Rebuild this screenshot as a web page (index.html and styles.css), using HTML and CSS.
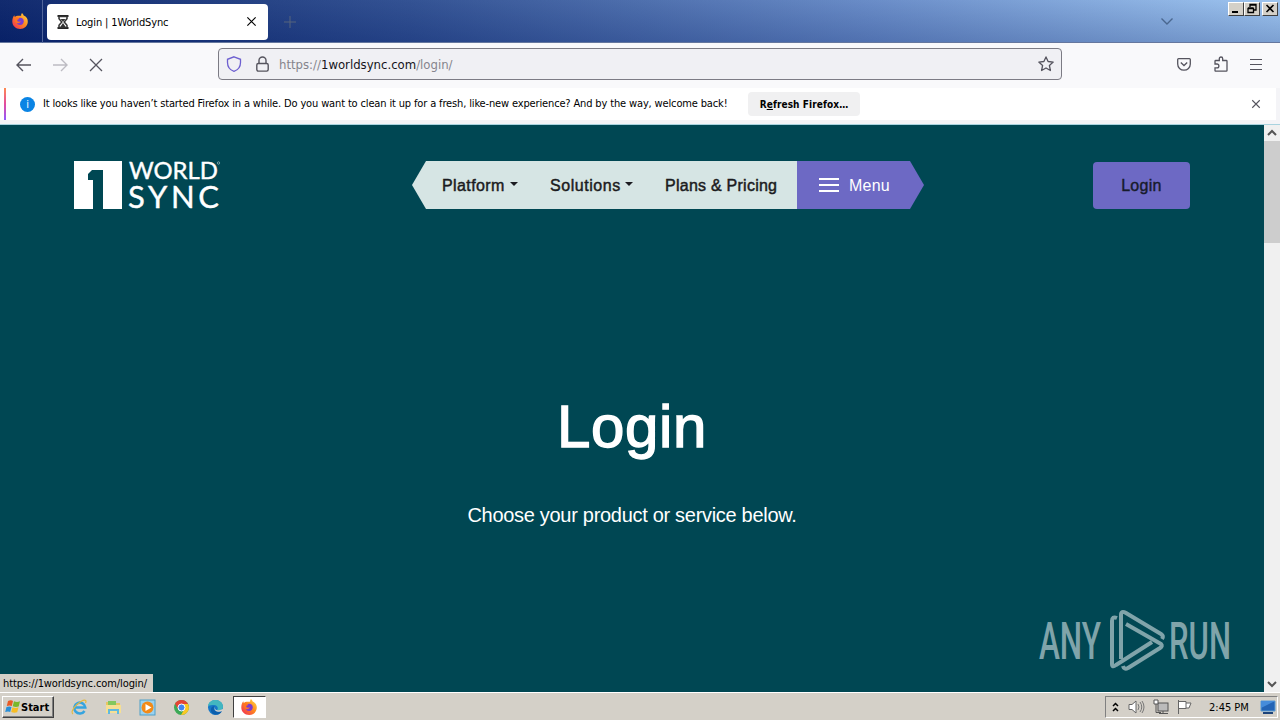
FILE: index.html
```html
<!DOCTYPE html>
<html lang="en">

<head>
	<meta charset="UTF-8">
	<meta name="viewport" content="width=device-width, initial-scale=1.0">
	<title>Login | 1WorldSync</title>
	<link rel="stylesheet" href="styles.css">
</head>

<body>
	<svg width="0" height="0" class="defs">
		<defs>
			<linearGradient id="fire" x1="1" y1="0" x2="0" y2="1">
				<stop offset="0" stop-color="#ffe14a" />
				<stop offset=".45" stop-color="#ff8a1e" />
				<stop offset="1" stop-color="#f0245c" />
			</linearGradient>
			<symbol id="firefox" viewBox="0 0 16 16">
				<path d="M10 0c1 1 1.400 1.700 1.700 2.500C14.500 3.600 16 6 15.800 9c-.3 4-3.500 7-7.600 7C3.700 16 .3 12.800.3 8.500.3 6 1 3.900 2.300 2.300l.5 1.700c.8-.8 1.800-1.200 3-1.200h3.300C9 1.700 9.300.8 10 0z" fill="url(#fire)" />
				<circle cx="8.100" cy="8.300" r="3.600" fill="#7a3bd0" />
				<path d="M2.500 5c2-.8 3.700-.5 5 .9-1.500.2-2.500.8-2.200 1.900.4 1.200 2.300.9 3.600.5-1 2.400-3.900 2.500-5.500.7z" fill="#ff751f" />
			</symbol>
			<symbol id="close" viewBox="0 0 16 16">
				<path d="M2 2l12 12M14 2L2 14" fill="none" stroke="currentColor" stroke-width="1.700" />
			</symbol>
		</defs>
	</svg>

	<header class="titlebar">
		<div class="view-button"><svg width="16" height="16"><use href="#firefox" /></svg></div>
		<div class="tab">
			<svg class="hourglass" width="12" height="14" viewBox="0 0 12 14">
				<path d="M.5 1h11M.5 13h11" stroke="#222" stroke-width="1.800" />
				<path d="M2 1.500v2.200L4.800 7 2 10.300v2.200h8v-2.200L7.200 7 10 3.700V1.500z" fill="#fff" stroke="#333" stroke-width="1.500" />
				<path d="M3.500 4h5L6 6.700zM6 8l2.700 4H3.300z" fill="#333" />
			</svg>
			<span class="tab-title">Login | 1WorldSync</span>
			<svg class="tab-close" width="11" height="11"><use href="#close" /></svg>
		</div>
		<svg class="new-tab" width="12" height="12" viewBox="0 0 12 12"><path d="M6 0v12M0 6h12" stroke="#56657c" /></svg>
		<svg class="all-tabs" width="12" height="7" viewBox="0 0 12 7"><path d="M.5.500L6 6l5.500-5.500" fill="none" stroke="#4a678f" stroke-width="1.400" /></svg>
		<div class="window-buttons">
			<span class="win"><svg width="14" height="12"><path d="M3 9h6" stroke="#000" stroke-width="2" /></svg></span>
			<span class="win"><svg width="14" height="12"><path d="M5 4V1.500h6V7H9M5 2h6M3 5.500h5.500v4H3zM3 5h5.500" fill="none" stroke="#000" stroke-width="1.300" /></svg></span>
			<span class="win win-close"><svg width="14" height="12"><path d="M3.500 2l7 7M10.500 2l-7 7" stroke="#000" stroke-width="1.600" /></svg></span>
		</div>
	</header>

	<nav class="toolbar">
		<svg class="back" width="16" height="14" viewBox="0 0 16 14"><path d="M15 7H1.500M7 1L1 7l6 6" fill="none" stroke="#55545e" stroke-width="1.400" /></svg>
		<svg class="forward" width="16" height="14" viewBox="0 0 16 14"><path d="M1 7h13.500M9 1l6 6-6 6" fill="none" stroke="#bdbcc3" stroke-width="1.400" /></svg>
		<svg class="stop" width="14" height="14" viewBox="0 0 14 14"><path d="M1 1l12 12M13 1L1 13" stroke="#55545e" stroke-width="1.300" /></svg>
		<div class="urlbar">
			<svg width="16" height="16" viewBox="0 0 16 16"><path d="M8 .8l6.500 2.500v3.200c0 4.300-2.700 7.500-6.500 8.800C4.200 14 1.500 10.800 1.500 6.500V3.300z" fill="none" stroke="#6d5fd0" stroke-width="1.300" /></svg>
			<svg class="lock" width="13" height="16" viewBox="0 0 13 16"><rect x=".8" y="7.500" width="11.400" height="7.600" rx="1.500" fill="none" stroke="#55545e" stroke-width="1.400" /><path d="M3 7.500v-3a3.500 3.500 0 0 1 7 0v3" fill="none" stroke="#55545e" stroke-width="1.400" /></svg>
			<span class="url">https://<b>1worldsync.com</b>/login/</span>
			<svg class="star" width="16" height="16" viewBox="0 0 16 16"><path d="M8 .9l2.100 4.600 5.100.6-3.800 3.400 1 5L8 12l-4.400 2.500 1-5L.8 6.100l5.100-.6z" fill="none" stroke="#55545e" stroke-width="1.300" stroke-linejoin="round" /></svg>
		</div>
		<svg class="pocket" width="14" height="13" viewBox="0 0 14 13"><path d="M1.600.7h10.800q.9 0 .9.900V6c0 3.600-2.800 6.200-6.300 6.200S.7 9.600.7 6V1.600q0-.9.9-.9z" fill="none" stroke="#55545e" stroke-width="1.300" /><path d="M3.800 4.500L7 7.500l3.200-3" fill="none" stroke="#55545e" stroke-width="1.300" /></svg>
		<svg class="extensions" width="14" height="16" viewBox="0 0 14 16"><path d="M1 8V5.200q0-.7.700-.7h3.600V2.700a1.700 1.700 0 0 1 3.400 0v1.800h3.600q.7 0 .7.700v9.300q0 .7-.7.700H1.700q-.7 0-.7-.7v-2.700h2a1.700 1.700 0 0 0 0-3.800z" fill="none" stroke="#55545e" stroke-width="1.300" /></svg>
		<svg class="app-menu" width="12" height="11" viewBox="0 0 12 11"><path d="M0 .5h12M0 5.500h12M0 10.500h12" stroke="#55545e" /></svg>
	</nav>

	<div class="infobar">
		<span class="info-icon">i</span>
		<span class="info-text">It looks like you haven’t started Firefox in a while. Do you want to clean it up for a fresh, like-new experience? And by the way, welcome back!</span>
		<button class="refresh">R<u>e</u>fresh Firefox…</button>
		<svg class="info-close" width="10" height="10"><use href="#close" /></svg>
	</div>

	<div class="viewport">
		<main class="page">
			<div class="site-header">
				<svg class="logo" width="150" height="50" viewBox="0 0 150 50">
					<path d="M0 0h48v48H29V9H18l-4 4v6h5v29H0z" fill="#fff" />
					<text x="55" y="18" textLength="89" lengthAdjust="spacingAndGlyphs" class="logo-world">WORLD</text>
					<text x="54" y="47" textLength="91" lengthAdjust="spacing" class="logo-sync">SYNC</text>
					<circle cx="144.500" cy="2" r="1.200" fill="none" stroke="#b5d0d3" stroke-width=".6" />
				</svg>
				<div class="main-nav">
					<div class="links">
						<a class="platform">Platform</a><i class="caret"></i>
						<a class="solutions">Solutions</a><i class="caret"></i>
						<a class="plans">Plans &amp; Pricing</a>
					</div>
					<div class="menu">
						<svg width="20" height="14" viewBox="0 0 20 14"><path d="M0 1h20M0 7h20M0 13h20" stroke="#fff" stroke-width="2" /></svg>
						<span>Menu</span>
					</div>
				</div>
				<a class="login-button">Login</a>
			</div>
			<h1>Login</h1>
			<p class="intro">Choose your product or service below.</p>
		</main>
		<div class="scrollbar">
			<svg width="16" height="16" viewBox="0 0 16 16"><path d="M4 10l4-4 4 4" fill="none" stroke="#555" stroke-width="2" /></svg>
			<div class="thumb"></div>
			<svg class="down" width="16" height="16" viewBox="0 0 16 16"><path d="M4 6l4 4 4-4" fill="none" stroke="#555" stroke-width="2" /></svg>
		</div>
		<svg class="watermark" width="200" height="64" viewBox="0 0 200 64">
			<text x="1" y="49.500" textLength="62" lengthAdjust="spacingAndGlyphs">ANY</text>
			<g fill="none" stroke="#80a4aa" stroke-width="4" stroke-linejoin="round">
				<path d="M79 9q-5-2-5 3v43q0 4 4 1l36-23" />
				<path d="M83 50V6q0-5 5-2l35 21q3 2 1 5" />
				<path d="M88 15l35 20q2 2-1 4L90 59q-4 2-5-2" />
			</g>
			<text x="131" y="49.500" textLength="62" lengthAdjust="spacingAndGlyphs">RUN</text>
		</svg>
		<div class="status">https://1worldsync.com/login/</div>
	</div>

	<footer class="taskbar">
		<div class="start">
			<svg width="16" height="16" viewBox="0 0 16 16"><path d="M3 2q3-1.500 5 0L6.800 7q-2-1-5 0z" fill="#e95b25" /><path d="M9 2.300q3 1.200 6 0L13.700 7.500q-3 1-6-.2z" fill="#79b82c" /><path d="M1.500 8q3-1 5 0l-1.300 5q-2-1-5 0z" fill="#288fd8" /><path d="M7.500 8.300q3 1.200 6 0l-1.300 5q-3 1-6-.2z" fill="#f7bd24" /></svg>
			<b>Start</b>
		</div>
		<div class="launchers">
			<svg width="17" height="17" viewBox="0 0 17 17"><path d="M13.500 12a5.500 5.500 0 1 1 .8-3.500H4" fill="none" stroke="#36a4df" stroke-width="2.500" /><path d="M2 15C-1 13 4 6 10 2.500c4-2.300 6-1.300 4.500 1.500" fill="none" stroke="#e5b93f" stroke-width="1.200" /></svg>
			<svg width="17" height="17" viewBox="0 0 17 17"><path d="M1 3h5l1 1h8v10H1z" fill="#e8c562" /><path d="M3 2h8v4H3z" fill="#83c75e" /><path d="M1 6h15v8H1z" fill="#f6df93" /><path d="M3 15v-5h11v5h-2v-3H5v3z" fill="#60b9df" /></svg>
			<svg width="17" height="17" viewBox="0 0 17 17"><rect x="1" y="1" width="15" height="15" fill="#9bd2ef" stroke="#4e9fc8" /><circle cx="8.500" cy="8.500" r="6" fill="#f28a18" /><path d="M6.500 5l6 3.500-6 3.500z" fill="#fff" /></svg>
			<svg width="17" height="17" viewBox="0 0 17 17"><circle cx="8.500" cy="8.500" r="7.500" fill="#3ca956" /><path d="M2 4.700A7.500 7.500 0 0 1 15 5H8.500L5 10z" fill="#e44435" /><path d="M15 5a7.500 7.500 0 0 1-7 11l4-7-3.500-4z" fill="#fbc823" /><circle cx="8.500" cy="8.500" r="3.500" fill="#4286ef" stroke="#fff" /></svg>
			<svg width="17" height="17" viewBox="0 0 17 17"><circle cx="8.500" cy="8.500" r="7.500" fill="#1678c8" /><path d="M1 7c1-8 15-8 15 1 0 3-3 4-6 3 2-2 0-5-3-5-2 0-4 0-6 1z" fill="#42b6c0" /><path d="M7 8c-1 4 3 6 8 4-3 6-12 4-11-2 0-2 2-3 4-3z" fill="#0c5fad" /><path d="M8 7.500c-1 3.500 2 5 8 2.500v2c-5 2-10 0-8-4.500z" fill="#d6d2cc" /></svg>
		</div>
		<div class="task"><svg width="16" height="16"><use href="#firefox" /></svg></div>
		<div class="tray">
			<svg width="7" height="11" viewBox="0 0 7 11"><path d="M1 4l2.500-2.500L6 4M1 9l2.500-2.500L6 9" fill="none" stroke="#000" stroke-width="1.500" /></svg>
			<svg class="volume" width="17" height="16" viewBox="0 0 17 16"><path d="M1 5.500h3L8 2v12l-4-3.500H1z" fill="#fff" stroke="#666" /><path d="M10 5q2 3 0 6M12 3q3.500 5 0 10M14 2q4 6 0 12" fill="none" stroke="#777" /></svg>
			<svg class="network" width="16" height="16" viewBox="0 0 16 16"><rect x="5" y="4" width="10" height="8" fill="#bbb" stroke="#555" /><path d="M6 14.500h9M10 12v2M3 5v8.500h5" stroke="#555" fill="none" /><path d="M1 1v4h4V1M2 0v2M4 0v2" fill="#fff" stroke="#555" /></svg>
			<svg class="flag" width="16" height="16" viewBox="0 0 16 16"><path d="M2.500 1v14M3 2.500h7v7H3M10 4h5l-2 5h-3" fill="#fff" stroke="#666" /></svg>
			<span class="clock">2:45 PM</span>
			<svg width="16" height="14" viewBox="0 0 16 14"><path d="M1 1h14v10H1z" fill="#2464b5" stroke="#5d9bd0" /><path d="M1 1h14L1 8z" fill="#468cda" /><path d="M3 13h10" stroke="#1d447a" stroke-width="2" /></svg>
		</div>
	</footer>
</body>

</html>
```
FILE: styles.css
```css
* {
	box-sizing: border-box;
}

body {
	margin: 0;
	width: 1280px;
	height: 720px;
	overflow: hidden;
	display: flex;
	flex-direction: column;
	font-family: 'DejaVu Sans Condensed', 'DejaVu Sans', sans-serif;
	font-size: 11px;
	color: #000;
}

svg {
	display: block;
	flex: none;
}

.defs {
	position: absolute;
}

/* browser window */
.titlebar {
	height: 43px;
	flex: none;
	display: flex;
	align-items: center;
	background: linear-gradient(180deg, rgba(255, 255, 255, .03), rgba(0, 20, 90, .2)), linear-gradient(90deg, #0a246a, #2d4d90 32%, #6589c6 68%, #9bc3ef);
	border-bottom: 1px solid #65779e;
}

.view-button {
	width: 43px;
	height: 43px;
	padding: 13px 0 0 12px;
	border-right: 1px solid #52669b;
}

.tab {
	width: 221px;
	height: 36px;
	margin: 1px 0 0 4px;
	padding: 0 11px 0 10px;
	display: flex;
	align-items: center;
	background: #fff;
	border-radius: 4px;
}

.tab-title {
	margin: 2px 0 0 7px;
	letter-spacing: -.13px;
	white-space: nowrap;
}

.tab-close {
	margin-left: auto;
}

.new-tab {
	margin: 2px 0 0 16px;
}

.all-tabs {
	margin-left: auto;
	margin-right: 55px;
}

.window-buttons {
	display: flex;
	align-self: flex-start;
	padding: 2px 2px 0 0;
}

.win {
	width: 16px;
	height: 14px;
	background: #d4d0c8;
	border: 1px solid;
	border-color: #fff #404040 #404040 #fff;
}

.win-close {
	margin-left: 2px;
}

.toolbar {
	height: 45px;
	flex: none;
	display: flex;
	align-items: center;
	padding: 0 18px 3px 16px;
	background: #f9f9fb;
}

.back,
.forward,
.stop {
	margin-top: 1px;
}

.forward {
	margin-left: 20px;
}

.stop {
	margin-left: 21px;
}

.urlbar {
	width: 844px;
	height: 32px;
	margin-left: 115px;
	padding: 0 7px;
	display: flex;
	align-items: center;
	background: #f0f0f4;
	border: 1px solid #7c7b84;
	border-radius: 4px;
}

.lock {
	margin-left: 14px;
}

.url {
	margin-left: 10px;
	font-size: 13px;
	color: #85848c;
}

.url b {
	font-weight: normal;
	color: #15141a;
}

.star {
	margin-left: auto;
}

.pocket {
	margin-left: 115px;
}

.extensions {
	margin-left: 23px;
}

.app-menu {
	margin-left: auto;
}

.infobar {
	height: 37px;
	flex: none;
	display: flex;
	align-items: center;
	padding: 0 19px 4px 16px;
	background: linear-gradient(#ff8a50, #e34b9e 50%, #9059ff) 4px 0 / 2px 32px no-repeat, linear-gradient(#fff, #fff) 0 0 / 1276px 32px no-repeat, #f4f4f7;
	border-bottom: 1px solid #a9d3df;
}

.info-icon {
	width: 15px;
	height: 15px;
	margin-left: 4px;
	border-radius: 50%;
	background: #0a84e4;
	color: #fff;
	text-align: center;
	line-height: 15px;
}

.info-text {
	width: 696px;
	margin: -1px 0 0 8px;
	white-space: nowrap;
	letter-spacing: -.145px;
}

.refresh {
	width: 112px;
	height: 24px;
	margin-left: 9px;
	padding: 0;
	border: 0;
	border-radius: 4px;
	background: #f0f0f1;
	font: bold 10px 'DejaVu Sans Condensed', sans-serif;
	letter-spacing: .1px;
	color: #000;
}

.info-close {
	margin-left: auto;
	color: #55545e;
}

/* site */
.viewport {
	position: relative;
	height: 567px;
	flex: none;
	display: flex;
}

.page {
	width: 1264px;
	background: #004753;
	color: #fff;
	font-family: 'Liberation Sans', Arial, sans-serif;
}

.site-header {
	height: 84px;
	padding: 36px 74px 0;
	display: flex;
}

.logo {
	overflow: visible;
}

.logo text {
	fill: #fff;
	stroke: #fff;
	stroke-width: .4px;
	font-family: Lato, sans-serif;
}

.logo-world {
	font-size: 23px;
}

.logo-sync {
	font-size: 31px;
}

.main-nav {
	width: 512px;
	height: 48px;
	margin-left: 188px;
	display: flex;
	clip-path: polygon(14px 0, 498px 0, 100% 50%, 498px 100%, 14px 100%, 0 50%);
	font-size: 16px;
}

.links {
	width: 385px;
	padding: 2px 0 0 30px;
	display: flex;
	align-items: center;
	background: #d6e5e4;
	color: #1b1b20;
	white-space: nowrap;
	-webkit-text-stroke: .45px #1b1b20;
}

.platform {
	width: 68px;
	letter-spacing: .4px;
}

.solutions {
	width: 75px;
	margin-left: 32px;
	letter-spacing: .55px;
}

.plans {
	margin-left: 32px;
	letter-spacing: .25px;
}

.caret {
	border: 4px solid transparent;
	border-top-color: #1b1b20;
	border-bottom: 0;
	margin-bottom: 4px;
}

.menu {
	flex: 1;
	padding-left: 22px;
	display: flex;
	align-items: center;
	gap: 10px;
	background: #6d69c4;
}

.menu span {
	margin-top: 2px;
	letter-spacing: .2px;
}

.login-button {
	width: 97px;
	height: 47px;
	margin: 1px 0 0 auto;
	border-radius: 4px;
	background: #6d69c4;
	color: #171b2b;
	font-size: 16px;
	line-height: 47px;
	text-align: center;
	letter-spacing: .3px;
	-webkit-text-stroke: .4px #171b2b;
}

h1 {
	margin: 183px 0 0;
	font-size: 60px;
	font-weight: normal;
	line-height: 70px;
	text-align: center;
	letter-spacing: .6px;
	-webkit-text-stroke: 1.4px #fff;
}

.intro {
	margin: 39px 0 0;
	font-size: 20px;
	line-height: 28px;
	text-align: center;
	letter-spacing: -.3px;
}

.scrollbar {
	width: 16px;
	display: flex;
	flex-direction: column;
	background: #f0f0f0;
}

.thumb {
	height: 102px;
	background: #cdcdcd;
}

.down {
	margin-top: auto;
}

.watermark {
	position: absolute;
	left: 1038px;
	top: 484px;
	overflow: visible;
}

.watermark text {
	fill: #80a4aa;
	font-family: Roboto, sans-serif;
	font-size: 52px;
	font-weight: 500;
}

.status {
	position: absolute;
	left: 0;
	bottom: 0;
	width: 153px;
	height: 18px;
	padding-left: 3px;
	line-height: 20px;
	background: #d4d0c8;
	letter-spacing: -.1px;
	white-space: nowrap;
}

/* desktop taskbar */
.taskbar {
	height: 28px;
	flex: none;
	display: flex;
	align-items: center;
	padding: 1px 2px 0;
	background: #d4d0c8;
	border-top: 1px solid #fff;
}

.start {
	width: 52px;
	height: 22px;
	padding-left: 2px;
	display: flex;
	align-items: center;
	border: 1px solid;
	border-color: #fff #404040 #404040 #fff;
	box-shadow: inset -1px -1px #808080;
}

.launchers {
	margin-left: 17px;
	display: flex;
	gap: 17px;
}

.task {
	width: 33px;
	height: 22px;
	margin-left: 9px;
	padding: 2px 0 0 7px;
	background: #fff;
	border: 1px solid;
	border-color: #404040 #fff #fff #404040;
}

.tray {
	width: 173px;
	height: 22px;
	margin-left: auto;
	padding-left: 6px;
	display: flex;
	align-items: center;
	border: 1px solid;
	border-color: #808080 #fff #fff #808080;
}

.volume {
	margin-left: 9px;
}

.network {
	margin-left: 8px;
}

.flag {
	margin-left: 7px;
}

.clock {
	width: 51px;
	margin-left: 17px;
	white-space: nowrap;
}
```
